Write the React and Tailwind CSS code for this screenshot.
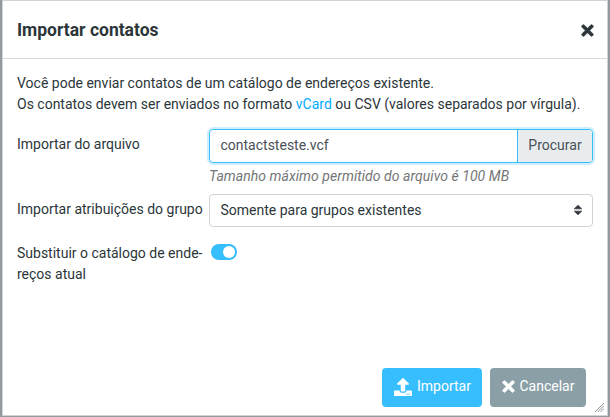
import { useState } from "react";
import { FaTimes, FaUpload } from "react-icons/fa";

function Row({ label, children }) {
  return (
    <div className="flex">
      <div className="w-48 shrink-0 pt-[5px] whitespace-pre-line">{label}</div>
      <div className="w-96">{children}</div>
    </div>
  );
}

export default function App() {
  const [replace, setReplace] = useState(true);

  return (
    <div className="w-[610px] h-[417px] overflow-hidden bg-[#949b9f] pl-[2px] pr-[2px] pb-px font-['Roboto',sans-serif] text-sm leading-[21px] text-[#2c363a]">
      <div className="relative flex flex-col h-full bg-white border border-[#ced4d8]">
        <div className="flex items-center justify-between h-[58px] shrink-0 pl-[14px] pr-[11.5px] border-b border-[#d6dadc]">
          <h1 className="pt-[2px] text-[17.5px] font-bold">Importar contatos</h1>
          <button aria-label="Fechar"><FaTimes className="size-[17px] mt-px stroke-current stroke-[20px]" /></button>
        </div>

        <div className="flex-1 pl-[14px] pt-[14px]">
          <p className="whitespace-nowrap">
            Você pode enviar contatos de um catálogo de endereços existente.<br />
            Os contatos devem ser enviados no formato <a className="text-[#00acff]">vCard</a> ou CSV (valores separados por vírgula).
          </p>

          <div className="mt-[14px]">
            <Row label="Importar do arquivo">
              <div className="flex h-[34px] rounded border border-[#37beff] shadow-[0_0_0_2px_#cdefff] overflow-hidden text-[#495057]">
                <div className="flex-1 flex items-center pl-[10.5px] pb-px">contactsteste.vcf</div>
                <div className="flex items-center justify-center w-[75px] pb-px bg-[#e9ecef] border-l border-[#37beff]">Procurar</div>
              </div>
              <div className="mt-[3px] italic tracking-[0.05px] text-[#737677]">Tamanho máximo permitido do arquivo é 100 MB</div>
            </Row>
          </div>

          <div className="mt-[7px]">
            <Row label="Importar atribuições do grupo">
              <div className="flex items-center justify-between h-[33px] rounded border border-[#ced4da] pl-[10.5px] pr-[10px]">
                Somente para grupos existentes
                <svg className="w-2 h-[10px] mb-px overflow-visible" viewBox="0 0 8 10">
                  <path fill="#343a40" stroke="#343a40" strokeWidth="0.8" strokeLinejoin="round" d="M4 0.3L0.3 3.8h7.4zM4 9.7L0.3 6.2h7.4z" />
                </svg>
              </div>
            </Row>
          </div>

          <div className="mt-[11px]">
            <Row label={"Substituir o catálogo de ende-\nreços atual"}>
              <button
                role="switch"
                aria-checked={replace}
                aria-label="Substituir"
                onClick={() => setReplace(!replace)}
                className={`flex items-center w-[26px] h-4 mt-[6px] ml-[2px] px-[2px] rounded-full ${replace ? "justify-end bg-[#37beff]" : "justify-start bg-[#adb5bd]"}`}
              >
                <span className="size-3 rounded-full bg-white" />
              </button>
            </Row>
          </div>
        </div>

        <div className="flex justify-end gap-2 pr-[21px] pb-2 text-white">
          <button className="flex items-center justify-center gap-[5px] w-[100px] h-[39px] pl-px pb-[2px] rounded bg-[#37beff]">
            <FaUpload className="size-[18px]" />
            Importar
          </button>
          <button className="flex items-center justify-center gap-[3px] w-24 h-[39px] pr-[2px] pb-[2px] rounded bg-[#8b9fa7]">
            <FaTimes className="size-[17px] stroke-current stroke-[20px]" />
            Cancelar
          </button>
        </div>

        {/* resize grip */}
        <svg className="absolute right-[3px] bottom-[3px] size-[9px]" viewBox="0 0 10 10" stroke="#85898b" strokeWidth="1">
          <path d="M0 10L10 0M3 10L10 3M6 10L10 6" />
        </svg>
      </div>
    </div>
  );
}
